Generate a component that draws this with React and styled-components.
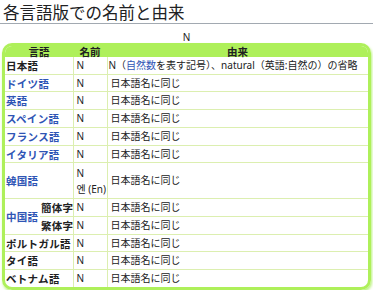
import React from 'react';
import styled, { createGlobalStyle } from 'styled-components';

const GlobalStyle = createGlobalStyle`
  body {
    margin: 0;
    background: #fff;
    font-family: "Noto Sans", "Noto Sans CJK JP", sans-serif;
    color: #202122;
  }
`;

const Page = styled.div`
  width: 373px;
  padding: 2px 0 0;
`;

const Heading = styled.h2`
  margin: 0;
  padding: 0 3px 1px;
  font-family: "Noto Sans CJK JP", sans-serif;
  font-weight: 400;
  font-size: 16.5px;
  line-height: 20px;
  color: #202122;
  border-bottom: 1px solid #a2a9b1;
`;

const Caption = styled.div`
  margin: 7px 3px 0;
  text-align: center;
  font-size: 10px;
  line-height: 12px;
  color: #202122;
`;

const Frame = styled.div`
  margin: 0 2px;
  border: 3px solid #aef05a;
  border-radius: 10px;
  box-shadow: 1px 2px 3px #b8f27a;
  overflow: hidden;
`;

const Table = styled.table`
  width: 100%;
  border-collapse: collapse;
  table-layout: fixed;
  font-family: "Noto Sans", "Noto Sans CJK JP", sans-serif;
  font-size: 10px;
`;

const Th = styled.th`
  background: #aef05a;
  font-weight: 700;
  text-align: center;
  padding: 0 2px;
  line-height: 11px;
  font-size: 10.5px;
  font-family: "Noto Sans CJK JP", sans-serif;
  color: #202122;
`;

const Td = styled.td`
  padding: ${p => (p.$tall ? '2px' : '1px')} ${p => (p.$tight ? '1px' : '3px')} ${p => (p.$tall ? '1px' : '0')};
  border-bottom: 1px solid #dcefb0;
  border-left: 1px solid #dcefb0;
  vertical-align: middle;
  text-align: ${p => (p.$right ? 'right' : 'left')};
  line-height: ${p => (p.$tall ? '16px' : '15.7px')};
  white-space: nowrap;
  &:first-child {
    border-left: none;
  }
`;

const LangCell = styled(Td)`
  font-family: "Noto Sans CJK JP", sans-serif;
  font-weight: 700;
  font-size: 10.5px;
  padding-left: 1px;
  padding-right: 1px;
  border-left: none;
  letter-spacing: 0.3px;
`;

const Link = styled.span`
  color: #2f55b5;
`;

const Last = styled.tr`
  td {
    border-bottom: none;
  }
`;

const rows = ['ドイツ語', '英語', 'スペイン語', 'フランス語', 'イタリア語'];

const same = '日本語名に同じ';

export default function App() {
  return (
    <Page>
      <GlobalStyle />
      <Heading>各言語版での名前と由来</Heading>
      <Caption>N</Caption>
      <Frame>
        <Table>
          <colgroup>
            <col style={{ width: '35px' }} />
            <col style={{ width: '33px' }} />
            <col style={{ width: '34px' }} />
            <col />
          </colgroup>
          <thead>
            <tr>
              <Th colSpan={2}>言語</Th>
              <Th>名前</Th>
              <Th>由来</Th>
            </tr>
          </thead>
          <tbody>
            <tr>
              <LangCell colSpan={2}>日本語</LangCell>
              <Td>N</Td>
              <Td $tight>N（<Link>自然数</Link>を表す記号）、natural（英語:自然の）の省略</Td>
            </tr>
            {rows.map(lang => (
              <tr key={lang}>
                <LangCell colSpan={2}><Link>{lang}</Link></LangCell>
                <Td>N</Td>
                <Td>{same}</Td>
              </tr>
            ))}
            <tr>
              <LangCell colSpan={2}><Link>韓国語</Link></LangCell>
              <Td $tall>N<br />엔 (En)</Td>
              <Td>{same}</Td>
            </tr>
            <tr>
              <LangCell rowSpan={2}><Link>中国語</Link></LangCell>
              <LangCell $right>簡体字</LangCell>
              <Td>N</Td>
              <Td>{same}</Td>
            </tr>
            <tr>
              <LangCell $right>繁体字</LangCell>
              <Td>N</Td>
              <Td>{same}</Td>
            </tr>
            <tr>
              <LangCell colSpan={2}>ポルトガル語</LangCell>
              <Td>N</Td>
              <Td>{same}</Td>
            </tr>
            <tr>
              <LangCell colSpan={2}>タイ語</LangCell>
              <Td>N</Td>
              <Td>{same}</Td>
            </tr>
            <Last>
              <LangCell colSpan={2}>ベトナム語</LangCell>
              <Td>N</Td>
              <Td>{same}</Td>
            </Last>
          </tbody>
        </Table>
      </Frame>
    </Page>
  );
}
